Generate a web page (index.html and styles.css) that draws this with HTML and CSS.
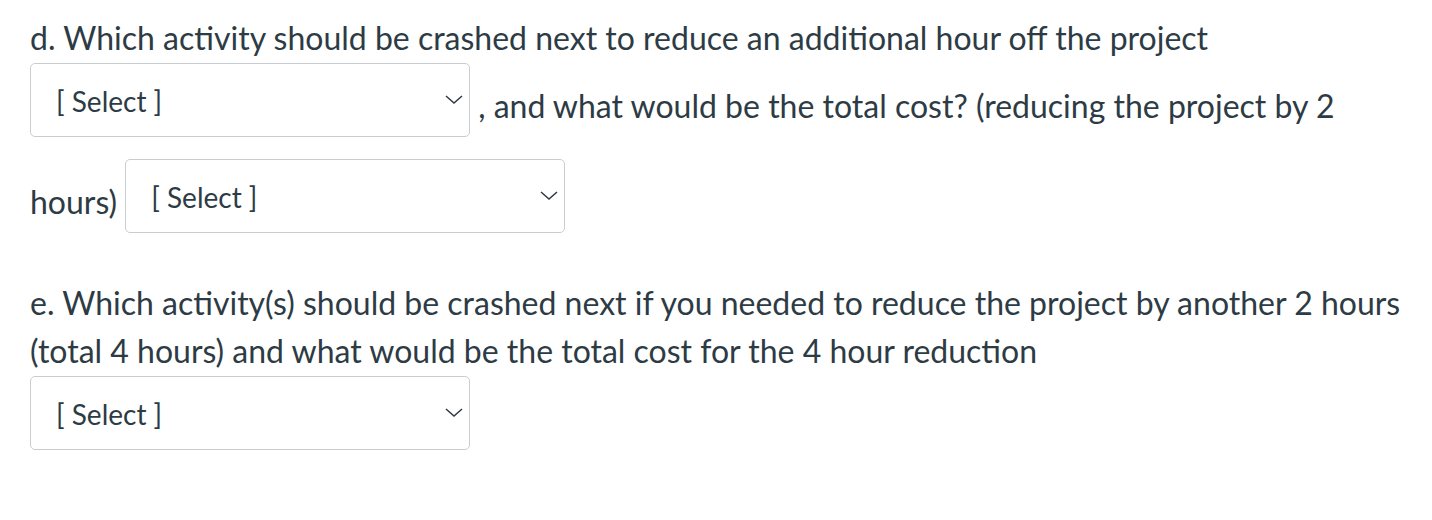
FILE: index.html
```html
<!DOCTYPE html>
<html lang="en">
<head>
<meta charset="utf-8">
<title>Quiz question</title>
<link rel="stylesheet" href="styles.css">
</head>
<body>
<div class="question">
  <p class="para">d. Which activity should be crashed next to reduce an additional hour off the project <span class="sel"><select class="sel-input" aria-label="Activity to crash"><option>[ Select ]</option></select><svg class="caret" viewBox="0 0 18 9" width="18" height="9" aria-hidden="true"><path d="M1 1 L9 8 L17 1" fill="none" stroke="#2d3b45" stroke-width="1.5"/></svg></span> , and what would be the total cost? (reducing the project by 2 hours) <span class="sel"><select class="sel-input" aria-label="Total cost"><option>[ Select ]</option></select><svg class="caret" viewBox="0 0 18 9" width="18" height="9" aria-hidden="true"><path d="M1 1 L9 8 L17 1" fill="none" stroke="#2d3b45" stroke-width="1.5"/></svg></span></p>
  <p class="para para-e">e. Which activity(s) should be crashed next if you needed to reduce the project by another 2 hours (total 4 hours) and what would be the total cost for the 4 hour reduction <span class="sel"><select class="sel-input" aria-label="Activities and cost"><option>[ Select ]</option></select><svg class="caret" viewBox="0 0 18 9" width="18" height="9" aria-hidden="true"><path d="M1 1 L9 8 L17 1" fill="none" stroke="#2d3b45" stroke-width="1.5"/></svg></span></p>
</div>
</body>
</html>
```
FILE: styles.css
```css
html, body {
  margin: 0;
  padding: 0;
  background: #ffffff;
}

body {
  font-family: Lato, "Open Sans", sans-serif;
  color: #2d3b45;
}

.question {
  padding: 14px 22px 0 30px;
  font-size: 32px;
  line-height: 48px;
}

.para {
  margin: 0;
}

.para-e {
  margin-top: 25px;
}

.sel {
  display: inline-block;
  position: relative;
  width: 440px;
  height: 74px;
  overflow: hidden;
  vertical-align: -40px;
  margin-top: 1px;
  margin-bottom: 21px;
  line-height: normal;
}

.sel-input {
  display: block;
  box-sizing: border-box;
  width: 440px;
  height: 74px;
  margin: 0;
  padding: 2px 40px 0 25px;
  border: 1px solid #c7cdd1;
  border-radius: 5px;
  background: #ffffff;
  color: #2d3b45;
  font-family: Lato, "Open Sans", sans-serif;
  font-size: 28px;
  -webkit-appearance: none;
  appearance: none;
}

.caret {
  position: absolute;
  right: 7px;
  top: 32px;
  pointer-events: none;
}
```
